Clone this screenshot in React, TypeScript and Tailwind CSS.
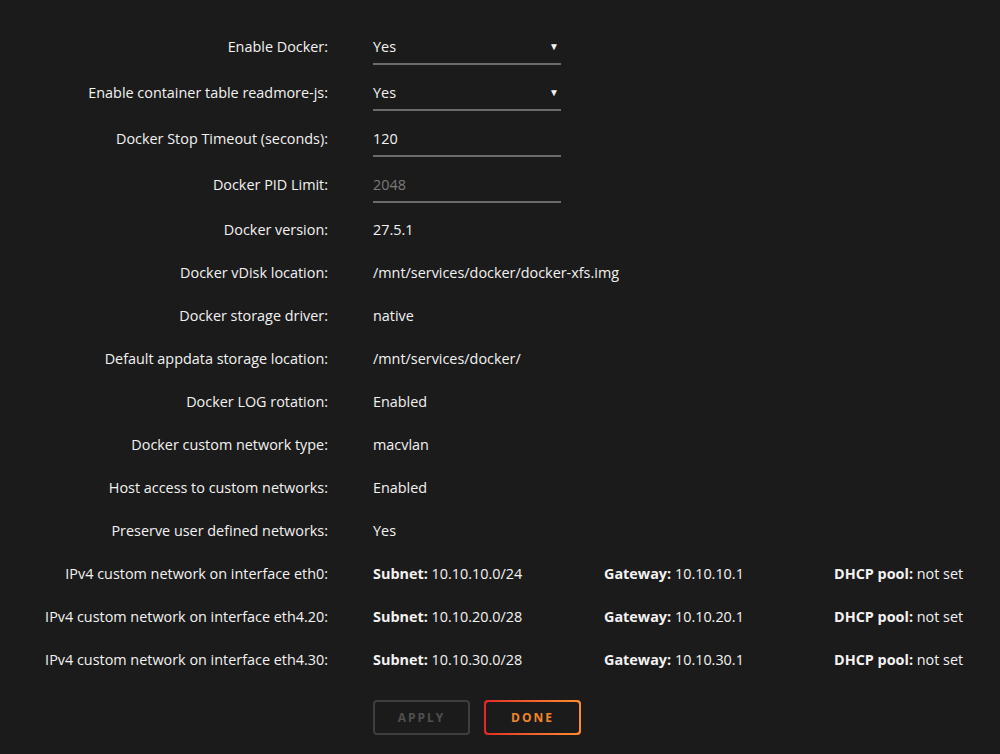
import React from "react";

const font = { fontFamily: '"Open Sans", "Liberation Sans", sans-serif' };

function Label({ children }: { children: React.ReactNode }) {
  return <div className="w-[328px] shrink-0 text-right">{children}</div>;
}

function SelectRow({ label, value }: { label: string; value: string }) {
  return (
    <div className="flex h-[46px] items-center">
      <Label>{label}</Label>
      <div className="ml-[45px] mt-[2px] flex h-[33px] w-[188px] items-center justify-between border-b-2 border-[#6b6b6b] pb-[1px]">
        <span>{value}</span>
        <span className="mr-[2px] text-[10px]">▼</span>
      </div>
    </div>
  );
}

function InputRow({ label, value, muted }: { label: string; value: string; muted?: boolean }) {
  return (
    <div className="flex h-[46px] items-center">
      <Label>{label}</Label>
      <div className="ml-[45px] mt-[2px] flex h-[33px] w-[188px] items-center border-b-2 border-[#6b6b6b] pb-[1px]">
        <span className={muted ? "text-[#7a7a7a]" : ""}>{value}</span>
      </div>
    </div>
  );
}

function TextRow({ label, children }: { label: string; children: React.ReactNode }) {
  return (
    <div className="flex h-[43px] items-center">
      <Label>{label}</Label>
      <div className="ml-[45px] flex items-center">{children}</div>
    </div>
  );
}

function NetRow({ iface, subnet, gateway }: { iface: string; subnet: string; gateway: string }) {
  return (
    <TextRow label={`IPv4 custom network on interface ${iface}:`}>
      <div className="w-[231px]">
        <b className="font-bold">Subnet:</b> {subnet}
      </div>
      <div className="w-[230px]">
        <b className="font-bold">Gateway:</b> {gateway}
      </div>
      <div>
        <b className="font-bold">DHCP pool:</b> not set
      </div>
    </TextRow>
  );
}

export default function App() {
  return (
    <div
      className="h-[754px] w-[1000px] overflow-hidden bg-[#1c1b1b] pt-[24px] text-[14.4px] text-[#f2f2f2]"
      style={font}
    >
      <SelectRow label="Enable Docker:" value="Yes" />
      <SelectRow label="Enable container table readmore-js:" value="Yes" />
      <InputRow label="Docker Stop Timeout (seconds):" value="120" />
      <InputRow label="Docker PID Limit:" value="2048" muted />
      <TextRow label="Docker version:">27.5.1</TextRow>
      <TextRow label="Docker vDisk location:">/mnt/services/docker/docker-xfs.img</TextRow>
      <TextRow label="Docker storage driver:">native</TextRow>
      <TextRow label="Default appdata storage location:">/mnt/services/docker/</TextRow>
      <TextRow label="Docker LOG rotation:">Enabled</TextRow>
      <TextRow label="Docker custom network type:">macvlan</TextRow>
      <TextRow label="Host access to custom networks:">Enabled</TextRow>
      <TextRow label="Preserve user defined networks:">Yes</TextRow>
      <NetRow iface="eth0" subnet="10.10.10.0/24" gateway="10.10.10.1" />
      <NetRow iface="eth4.20" subnet="10.10.20.0/28" gateway="10.10.20.1" />
      <NetRow iface="eth4.30" subnet="10.10.30.0/28" gateway="10.10.30.1" />
      <div className="ml-[373px] mt-[19px] flex gap-[14px]">
        <div className="flex h-[35px] w-[97px] items-center justify-center rounded-[4px] border-2 border-[#3e3e3e] text-[12px] font-bold tracking-[2px] text-[#4f4f4f]">
          APPLY
        </div>
        <div className="h-[35px] w-[97px] rounded-[4px] bg-gradient-to-r from-[#e22828] to-[#ff8c2f] p-[2px]">
          <div className="flex h-full w-full items-center justify-center rounded-[3px] bg-[#1c1b1b] text-[12px] font-bold tracking-[2px] text-[#f0862c]">
            DONE
          </div>
        </div>
      </div>
    </div>
  );
}
